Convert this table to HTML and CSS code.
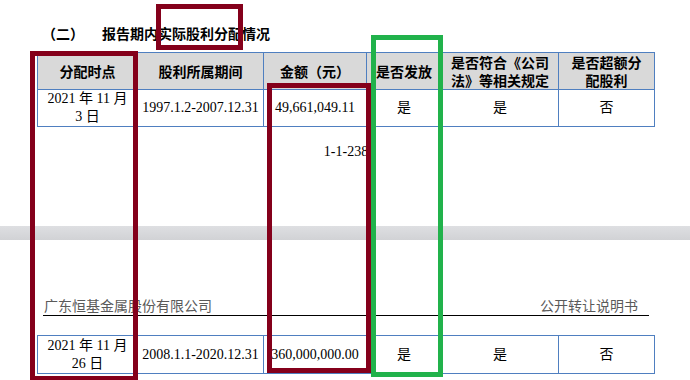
FILE: index.html
```html
<!DOCTYPE html>
<html lang="zh-CN">
<head>
<meta charset="utf-8">
<title>报告期内实际股利分配情况</title>
<link rel="stylesheet" href="styles.css">
</head>
<body>
<div class="sheet">
  <section class="page page-one">
    <h2 class="section-title"><span class="num">（二）</span><span class="caption">报告期内实际股利分配情况</span></h2>
    <table class="dividend">
      <colgroup>
        <col class="c1"><col class="c2"><col class="c3"><col class="c4"><col class="c5"><col class="c6">
      </colgroup>
      <thead>
        <tr>
          <th>分配时点</th>
          <th>股利所属期间</th>
          <th>金额（元）</th>
          <th>是否发放</th>
          <th>是否符合《公司<br>法》等相关规定</th>
          <th>是否超额分<br>配股利</th>
        </tr>
      </thead>
      <tbody>
        <tr>
          <td>2021 年 11 月<br>3 日</td>
          <td>1997.1.2-2007.12.31</td>
          <td>49,661,049.11</td>
          <td>是</td>
          <td>是</td>
          <td>否</td>
        </tr>
      </tbody>
    </table>
    <div class="page-no">1-1-238</div>
  </section>

  <div class="page-gap"></div>

  <section class="page page-two">
    <div class="running-head">
      <span>广东恒基金属股份有限公司</span>
      <span>公开转让说明书</span>
    </div>
    <table class="dividend">
      <colgroup>
        <col class="c1"><col class="c2"><col class="c3"><col class="c4"><col class="c5"><col class="c6">
      </colgroup>
      <tbody>
        <tr class="row-2">
          <td>2021 年 11 月<br>26 日</td>
          <td>2008.1.1-2020.12.31</td>
          <td>360,000,000.00</td>
          <td>是</td>
          <td>是</td>
          <td>否</td>
        </tr>
      </tbody>
    </table>
  </section>

  <div class="mark mark-red mark-title"></div>
  <div class="mark mark-red mark-date"></div>
  <div class="mark mark-red mark-amount"></div>
  <div class="mark mark-green mark-paid"></div>
</div>
</body>
</html>
```
FILE: styles.css
```css
* { box-sizing: border-box; }

html, body {
  margin: 0;
  padding: 0;
  background: #ffffff;
}

body {
  font-family: "Liberation Serif", "Noto Sans CJK SC", serif;
  color: #000;
  font-size: 14px;
}

.sheet {
  position: relative;
  width: 690px;
  height: 380px;
  overflow: hidden;
}

.page-one {
  padding-top: 23px;
}

.section-title {
  margin: 0 0 9px 0;
  padding-left: 42px;
  font-family: "Noto Sans CJK SC", sans-serif;
  font-size: 14px;
  font-weight: 700;
  line-height: 20px;
  height: 20px;
  display: flex;
}

.section-title .num {
  width: 60px;
}

.dividend {
  border-collapse: collapse;
  table-layout: fixed;
  width: 617px;
  margin-left: 37px;
}

.dividend col.c1 { width: 100px; }
.dividend col.c2 { width: 126px; }
.dividend col.c3 { width: 103px; }
.dividend col.c4 { width: 75px; }
.dividend col.c5 { width: 117px; }
.dividend col.c6 { width: 96px; }

.dividend th,
.dividend td {
  border: 1px solid #4f7fc0;
  padding: 0;
  text-align: center;
  vertical-align: middle;
  line-height: 18px;
  white-space: nowrap;
}

.dividend th {
  background: #d9d9d9;
  font-family: "Noto Sans CJK SC", sans-serif;
  font-weight: 700;
  font-size: 14px;
  height: 36px;
}

.dividend td {
  font-family: "Liberation Serif", "Noto Sans CJK SC", serif;
  font-weight: 400;
  height: 37px;
}

.dividend .row-2 td {
  height: 38px;
}

.page-no {
  margin-top: 16px;
  text-align: center;
  line-height: 18px;
  height: 18px;
  padding-left: 2px;
}

.page-gap {
  margin-top: 65px;
  height: 14px;
  background: linear-gradient(#dedfe2, #d1d2d5);
}

.page-two {
  padding-top: 56px;
}

.running-head {
  display: flex;
  justify-content: space-between;
  margin-left: 43px;
  width: 606px;
  padding: 0 11px 1px 1px;
  border-bottom: 1px solid #000;
  font-family: "Noto Sans CJK SC", sans-serif;
  font-size: 14px;
  line-height: 18px;
  color: #5a5a5a;
}

.page-two .dividend {
  margin-top: 19px;
}

/* annotation boxes drawn over the scan */
.mark {
  position: absolute;
  border-style: solid;
  border-width: 5px;
  background: transparent;
}

.mark-red { border-color: #84001b; }
.mark-green { border-color: #21b24b; }

.mark-title {
  left: 156px;
  top: 4px;
  width: 87px;
  height: 46px;
}

.mark-date {
  left: 30px;
  top: 51px;
  width: 108px;
  height: 330px;
}

.mark-amount {
  left: 267px;
  top: 83px;
  width: 104px;
  height: 290px;
}

.mark-paid {
  left: 371px;
  top: 35px;
  width: 72px;
  height: 342px;
}
```
